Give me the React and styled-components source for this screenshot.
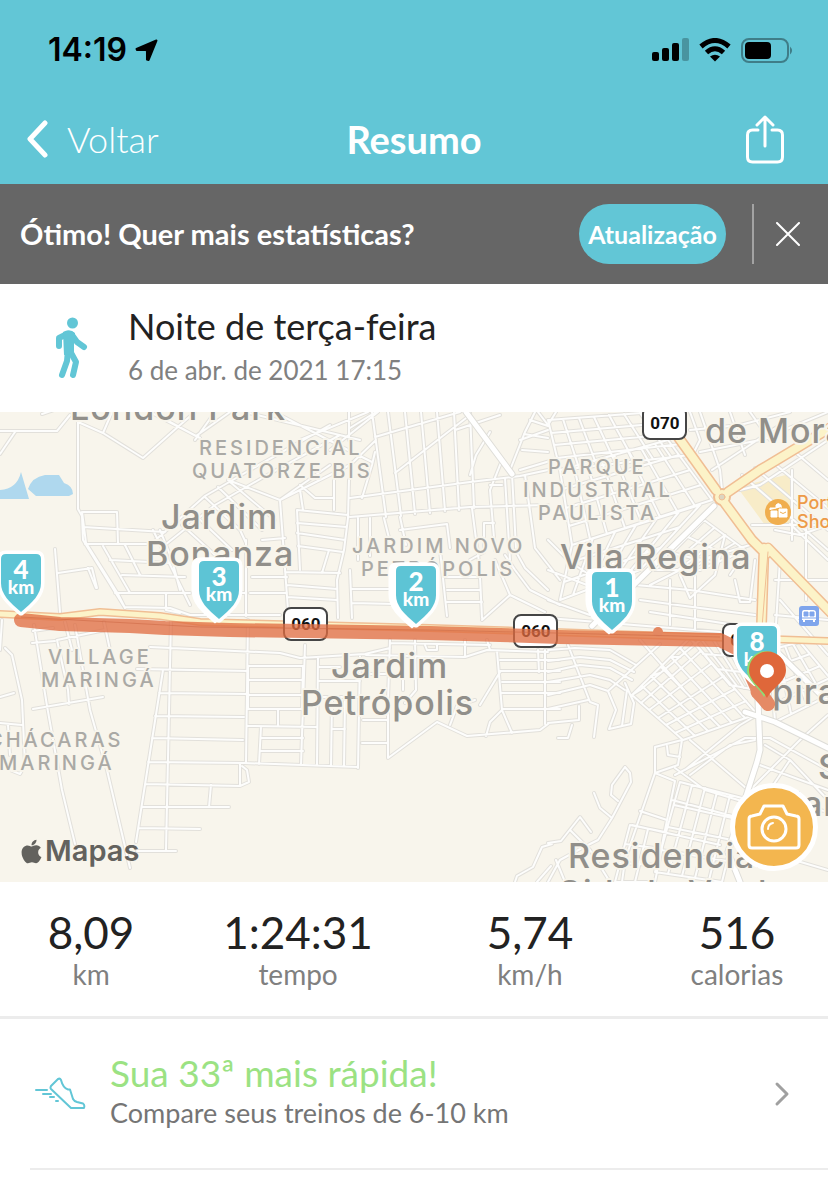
import React from 'react';
import styled, { createGlobalStyle } from 'styled-components';
import { FaApple } from 'react-icons/fa';

const teal = '#62c6d6';
const brandFont = 'Lato, "Open Sans", "Liberation Sans", sans-serif';
const systemFont = 'Inter, Roboto, "Liberation Sans", sans-serif';

const GlobalStyle = createGlobalStyle`
  * { box-sizing: border-box; }
  body { margin: 0; background: #fff; font-family: ${brandFont}; color: #222; }
  button { font: inherit; color: inherit; background: none; border: 0; padding: 0; cursor: pointer; }
  h1, h2, h3, p, dl, dt, dd { margin: 0; font-weight: 400; }
  svg { display: block; flex: none; }
`;

const Page = styled.div`
  display: flex;
  flex-direction: column;
  min-height: 100vh;
`;

const TopBar = styled.header`
  background: ${teal};
`;

const StatusBar = styled.div`
  display: flex;
  align-items: center;
  justify-content: space-between;
  height: 96px;
  padding: 4px 34px 0 48px;
  color: #000;
`;

const Clock = styled.div`
  display: flex;
  align-items: center;
  gap: 8px;
  font: 600 32px/40px ${systemFont};
`;

const StatusIcons = styled.div`
  display: flex;
  align-items: center;
  gap: 10px;
`;

const NavBar = styled.nav`
  display: grid;
  grid-template-columns: 1fr auto 1fr;
  align-items: center;
  height: 88px;
  padding: 0 44px 2px 26px;
  color: #fff;
`;

const BackButton = styled.button`
  display: flex;
  align-items: center;
  gap: 19px;
  justify-self: start;
  && { font-size: 36px; line-height: 44px; font-weight: 300; }
`;

const NavTitle = styled.h1`
  && { font-size: 38px; line-height: 44px; font-weight: 700; }
  padding-left: 18px;
`;

const ShareButton = styled.button`
  justify-self: end;
`;

const Banner = styled.section`
  display: flex;
  align-items: center;
  height: 100px;
  padding: 0 28px 0 20px;
  background: #666;
  color: #fff;
`;

const BannerText = styled.p`
  flex: 1;
  && { font-size: 29px; line-height: 36px; font-weight: 700; }
`;

const UpgradeButton = styled.button`
  && {
    width: 147px;
    height: 60px;
    border-radius: 30px;
    background: ${teal};
    font-size: 25px;
    font-weight: 700;
    white-space: nowrap;
  }
`;

const BannerDivider = styled.span`
  width: 2px;
  height: 60px;
  margin: 0 22px 0 26px;
  background: #a3a3a3;
`;

const Activity = styled.section`
  display: flex;
  align-items: center;
  height: 128px;
  padding-left: 52px;
  gap: 38px;
`;

const ActivityTitle = styled.h2`
  && { font-size: 36px; line-height: 44px; }
  color: #222;
`;

const ActivityDate = styled.p`
  font-size: 26px;
  line-height: 44px;
  color: #808080;
`;

const MapPanel = styled.section`
  position: relative;
  height: 470px;
  overflow: hidden;
  background: #f8f5ec;
`;

const MapCanvas = styled.svg`
  width: 100%;
  height: 100%;
`;

const Place = styled.text`
  font-family: ${systemFont};
  font-size: ${(p) => (p.$small ? 20 : 34)}px;
  font-weight: 500;
  letter-spacing: ${(p) => (p.$small ? 3 : 1)}px;
  fill: ${(p) => (p.$small ? '#aaa9a5' : '#918f8a')};
  stroke: #f8f5ec;
  stroke-width: 4px;
  stroke-linejoin: round;
  paint-order: stroke;
`;

const ShopName = styled.text`
  font: 500 18px ${systemFont};
  fill: #ed9a48;
  stroke: #f8f5ec;
  stroke-width: 3px;
  paint-order: stroke;
`;

const ShieldText = styled.text`
  font: 700 17px Roboto, sans-serif;
  fill: #111;
`;

const PinNumber = styled.text`
  font: 900 26px ${brandFont};
  fill: #fff;
`;

const PinUnit = styled.text`
  font: 900 19px ${brandFont};
  fill: #fff;
`;

const Attribution = styled.div`
  position: absolute;
  left: 18px;
  bottom: 13px;
  display: flex;
  align-items: center;
  color: #63625e;
  font: 600 29px/36px ${systemFont};
`;

const CameraButton = styled.button`
  && {
    position: absolute;
    right: 10px;
    bottom: 11px;
    width: 88px;
    height: 88px;
    display: grid;
    place-items: center;
    border: 5px solid #fff;
    border-radius: 50%;
    background: #f3b64f;
  }
`;

const Stats = styled.dl`
  display: grid;
  grid-template-columns: 22fr 28fr 28fr 22fr;
  height: 137px;
  padding-top: 24px;
  border-bottom: 3px solid #ececec;
  text-align: center;
`;

const Stat = styled.div`
  display: flex;
  flex-direction: column-reverse;
  justify-content: flex-end;
`;

const StatValue = styled.dd`
  font-size: 44px;
  line-height: 52px;
  color: #222;
`;

const StatLabel = styled.dt`
  font-size: 28px;
  line-height: 32px;
  color: #808080;
`;

const CompareLink = styled.a`
  display: flex;
  align-items: center;
  height: 151px;
  margin-left: 30px;
  padding: 0 38px 0 4px;
  gap: 24px;
  border-bottom: 2px solid #ececec;
  color: inherit;
  text-decoration: none;
`;

const CompareText = styled.div`
  flex: 1;
  padding-bottom: 6px;
`;

const CompareTitle = styled.h3`
  && { font-size: 37px; line-height: 44px; }
  color: #9be283;
`;

const CompareDetail = styled.p`
  font-size: 27px;
  line-height: 36px;
  color: #757575;
`;

// Streets of a block: the corners run clockwise from the top left.
// Zero rows gives streets in one direction only.
function block([a, b, c, d], cols, rows) {
  const mix = (p, q, t) => [p[0] + (q[0] - p[0]) * t, p[1] + (q[1] - p[1]) * t];
  const line = (p, q) => `M${p.map(Math.round)}L${q.map(Math.round)}`;
  let out = '';
  for (let i = 0; i <= cols; i += 1) out += line(mix(a, b, i / cols), mix(d, c, i / cols));
  for (let j = 0; rows > 0 && j <= rows; j += 1) out += line(mix(a, d, j / rows), mix(b, c, j / rows));
  return out;
}

const streets = [
  // north west
  'M0 431H57L70 415M0 454L15 432M42 414L60 408M78 422V509L82 516L83 540L125 608M78 422L103 433L143 458L180 425L195 412M103 433L112 412M150 412L200 438M83 512H117L118 543M83 527L165 532M82 512L86 543L118 594L125 608M85 544H150',
  'M103 546L130 593M125 545L140 575M55 549L60 612M58 573L92 568L97 588M88 568L96 588M115 593H190M122 575L185 577M110 560L170 563M153 530L190 605M166 594V610L180 613M195 440L215 412M170 422L196 436L230 412M125 607L170 608L190 615H280',
  'M150 545L205 496L250 470L330 425M165 545L215 505L262 478L340 435M182 525L215 555M192 512L232 550M205 497L240 530L246 543M218 487L262 530M230 482L275 520M160 530L172 560L180 590M246 540V616M252 577H287M250 593H287M200 593H246M228 480L280 500L330 465M262 540L285 538',
  'M245 412L360 440M280 415L348 450L372 462M300 440L368 412M330 450L378 412M349 412V440M350 428L376 412M280 500L288 610M280 500L350 465L376 440M300 485L315 498H334M300 490L303 510M334 480V510',
  // north centre
  block([[372, 412], [470, 412], [474, 508], [386, 517]], 6, 0),
  'M375 437L460 412M395 473L470 415M375 452L372 465L362 498M349 480L348 518L344 550L337 580L338 618M297 510L348 515M297 523L347 527M297 533L345 540M298 546L343 552M285 572L340 573M287 585L337 589M287 597L337 600M297 510L300 570M329 550L322 573M350 570L352 618M358 518V560M370 518V556M352 589H395M352 603L395 604M445 577H480M447 590H480M447 602H482M480 577L482 618M440 550L447 616',
  'M350 517L470 507L548 505M350 498L470 482L520 476L548 470M400 530L447 524L450 548M384 518L392 550M400 517L406 545M472 508L480 570M484 523H494M484 523V552L470 560M490 432L476 455L470 475M510 470L525 432L535 412M512 474L502 460L490 490L495 550M512 474L516 548M505 478L510 560M490 485H502M520 440L548 430M530 420L548 426M524 434L548 438M522 450L548 452M520 470L560 458',
  'M482 620L510 595L545 612M525 475L535 548L560 580M505 555L515 570L530 590L560 605M515 550L525 568L548 590M495 560L510 595M538 412L548 425L556 412M455 430L500 415',
  block([[548, 420], [655, 412], [690, 455], [560, 470]], 7, 4),
  block([[560, 470], [668, 440], [712, 500], [572, 545]], 8, 4),
  block([[572, 545], [700, 505], [640, 570], [560, 600]], 6, 3),
  block([[704, 520], [745, 550], [700, 570], [655, 570]], 4, 3),
  'M548 540L570 562L590 575M548 570L600 590M548 600L590 615M548 618L720 632M636 585L690 590L755 600M640 600L700 608L755 615M650 612L755 628M650 585L700 560L750 545M680 575L690 598L715 575L725 535M730 575L740 560M735 580L740 602H750L755 560M695 575V630M670 580V625',
  // north east
  'M690 412L700 440L690 460M700 412L720 470L722 490M690 430L740 425L790 412M700 452L760 440L828 412M712 470L780 425M730 412L745 455M750 412L770 440M742 475L828 550M755 468L828 530M770 460L828 508M790 448L828 480M740 490L760 485L828 440M792 470V540M752 525H828M790 524L828 560M806 525V600M775 530L800 535L828 525M780 600L828 655M775 580H828M780 560L775 640M775 615L828 620',
  // west and the slanted estate
  'M34 625L47 706L62 790L75 844M33 709L103 697M75 625L90 710L107 770L130 868M57 640L68 690L69 704M32 643L55 641M5 648L12 655L22 700L25 765L20 774L10 770M0 697L14 693M0 723L22 725M8 725L10 755M33 631L53 628M57 640L105 630M104 622L110 650M0 650L2 620M65 622L72 650',
  'M163 670L136 842M171 620L166 850M248 620L246 762M137 669L248 671M159 693L247 694M155 716L244 717M152 738L243 740M148 762L244 763L358 767M145 784L240 786M142 807H229M139 828L200 829M137 851H176M211 785L209 807M240 763V786L249 782L247 770L242 766M150 647L280 653L300 658L365 654L390 648',
  // Jardim Petrópolis
  block([[248, 666], [303, 666], [302, 709], [248, 709]], 1, 3),
  'M248 726L316 727M261 727L259 764M261 738H303M261 751H303M278 709V726M305 645L301 765M318 658L317 765M332 700L331 766M345 700L344 766M360 655L358 768M362 743H388M388 712V758L437 722L467 736L540 730L548 724M363 720H388M332 729H345M363 674H388M390 640L388 700M318 681H360M318 667H340M318 697H360M366 655L465 657L487 650L548 652M390 643L490 645M415 640L416 690L405 703M403 660V690M425 645L427 650H437V645M465 640V657M487 640L490 650M497 651L502 710L512 733M502 710L490 722L486 736M480 705L500 672M500 660H560M500 671H560M502 682H560M502 693H560M503 709H560M538 650L539 672M545 650V724M450 725L457 706L475 700',
  'M515 882L517 876L533 867L542 847L552 844M537 882L551 866',
  // south east
  'M548 650L575 648L610 650L636 665M548 661L580 657L610 660L634 672M548 672L580 665L610 668L632 680M548 682L590 675L610 680L625 690M548 695L590 685L608 691M568 645L590 702L598 705L594 737M548 709L588 700M548 723L579 720V706M572 725L568 738H558M608 691L616 710L609 729L631 724L634 703L625 683M622 726L627 690M608 691L660 644',
  block([[632, 695], [690, 638], [757, 714], [683, 740]], 6, 6),
  block([[632, 695], [690, 638], [700, 640], [640, 690]], 3, 1),
  block([[690, 638], [735, 640], [757, 690], [730, 685]], 4, 3),
  block([[770, 650], [800, 642], [840, 690], [775, 722]], 4, 4),
  'M655 747L682 740L678 765L655 773V747M655 773L625 860L622 882M667 746L668 755L680 757M655 773L675 781M675 781L665 830L655 882M685 770L740 725L757 715M675 775L745 738H770L828 770M690 775L730 745L755 740M675 768L705 790L745 802M672 800L740 818M632 825L720 845M640 811L667 820M690 740L760 800L800 830M757 764L828 790M765 745L790 760L828 800M790 760L770 790M750 790L800 740L828 715M640 640L684 690',
  block([[680, 782], [742, 798], [722, 882], [655, 872]], 5, 4),
  block([[630, 825], [665, 832], [655, 882], [615, 882]], 2, 3),
  'M625 767L630 773L631 782L612 818L598 840L582 848L560 860L548 882M625 767L612 785L611 795L618 801M594 793L600 808L612 818M548 843L561 841L580 817L591 832M570 830L590 850M556 860L565 882M590 850L610 882M760 850L828 870M780 800L828 812',
].join('');

const whiteRoads = 'M714 506L592 626M758 700L760 750L757 762L748 790L735 830L728 852L740 882M745 712L775 722L828 748M775 650L828 702M466 412L512 474';
const highways = 'M676 434L716 490M728 492L760 470L840 422M724 502L752 540L766 554M764 548L761 640M768 548L840 622';
const trunk = 'M0 614L60 617L100 612L160 616L200 622L430 628L828 641';
const route = 'M21 620L60 624L130 626L165 628L230 630L430 633L500 635L560 637L720 640L740 650L757 688L768 704';

const places = [
  { x: 70, y: 420, text: 'London Park' },
  { x: 199, y: 455, text: 'RESIDENCIAL', small: true },
  { x: 192, y: 478, text: 'QUATORZE BIS', small: true },
  { x: 161, y: 529, text: 'Jardim' },
  { x: 146, y: 566, text: 'Bonanza' },
  { x: 352, y: 553, text: 'JARDIM NOVO', small: true },
  { x: 361, y: 576, text: 'PETRÓPOLIS', small: true },
  { x: 548, y: 474, text: 'PARQUE', small: true },
  { x: 523, y: 497, text: 'INDUSTRIAL', small: true },
  { x: 538, y: 520, text: 'PAULISTA', small: true },
  { x: 560, y: 569, text: 'Vila Regina' },
  { x: 705, y: 443, text: 'de Morais' },
  { x: 48, y: 664, text: 'VILLAGE', small: true },
  { x: 41, y: 687, text: 'MARINGÁ', small: true },
  { x: -12, y: 747, text: 'CHÁCARAS', small: true },
  { x: -1, y: 770, text: 'MARINGÁ', small: true },
  { x: 331, y: 678, text: 'Jardim' },
  { x: 301, y: 715, text: 'Petrópolis' },
  { x: 762, y: 704, text: 'Ipiranga' },
  { x: 818, y: 779, text: 'Sta' },
  { x: 771, y: 816, text: 'Maria' },
  { x: 568, y: 868, text: 'Residencial' },
  { x: 557, y: 905, text: 'Cidade Verde' },
];

const kmPins = [
  { x: 21, y: 554, n: 4 },
  { x: 219, y: 561, n: 3, ghost: 4 },
  { x: 416, y: 566, n: 2, ghost: 4 },
  { x: 612, y: 572, n: 1, ghost: 3 },
  { x: 757, y: 626, n: 8 },
];

const pinShape = 'M-15 0H15Q20 0 20 5V29C20 40 12 48 0 58C-12 48 -20 40 -20 29V5Q-20 0 -15 0Z';

function KmPin({ x, y, n, ghost }) {
  return (
    <g transform={`translate(${x} ${y})`}>
      {ghost && <path d={pinShape} transform={`translate(${-ghost} 0)`} fill={teal} stroke="#fff" strokeWidth="7" />}
      <path d={pinShape} fill={teal} stroke="#fff" strokeWidth="7" strokeLinejoin="round" />
      <path d={pinShape} fill="#5dc4d5" />
      <PinNumber x="0" y="25" textAnchor="middle">{n}</PinNumber>
      <PinUnit x="0" y="40" textAnchor="middle">km</PinUnit>
    </g>
  );
}

function Shield({ x, y, label }) {
  return (
    <g>
      <rect x={x} y={y} width="43" height="32" rx="7" fill="#fff" stroke="#454545" strokeWidth="2" />
      <ShieldText x={x + 22} y={y + 22} textAnchor="middle">{label}</ShieldText>
    </g>
  );
}

function RouteMap() {
  return (
    <MapCanvas viewBox="0 412 828 470" preserveAspectRatio="xMidYMid slice" role="img" aria-label="Mapa do percurso">
      <path d="M737 487L790 474V525H765Z" fill="#f8ecc8" />
      <path d="M0 490Q17 489 21 472L29 499H0ZM28 489Q32 477 45 475H59L64 483Q73 486 73 494L69 496H36Z" fill="#afd8ee" />
      <g fill="none" strokeLinejoin="round" strokeLinecap="round">
        <path d={streets} stroke="#e2e0db" strokeWidth="4" />
        <path d={streets} stroke="#fdfdfc" strokeWidth="2" />
        <path d={whiteRoads} stroke="#deddd8" strokeWidth="7" />
        <path d={whiteRoads} stroke="#fff" strokeWidth="5" />
        <path d={trunk} stroke="#f0be94" strokeWidth="8" />
        <path d={trunk} stroke="#fcf3c8" strokeWidth="5" />
        <path d={highways} stroke="#f0be94" strokeWidth="11" />
        <circle cx="722" cy="497" r="8" fill="#fcf3c8" stroke="#f0be94" strokeWidth="2" />
        <path d={highways} stroke="#fcf3c8" strokeWidth="8" />
        <circle cx="722" cy="497" r="3" fill="#ddd5c0" stroke="#f0be94" />
        <path d="M768 552L761 640" stroke="#f0be94" strokeWidth="1" />
      </g>
      {places.map((p, i) => (
        <Place key={i} x={p.x} y={p.y} $small={p.small}>{p.text}</Place>
      ))}
      <circle cx="778" cy="512" r="13" fill="#f0ae4e" />
      <path d="M770 510V508H776V505Q778 502 781 505V507H782M771 511H777V517H771ZM779 509H787V517H779Z" fill="#fff" stroke="#fff" strokeWidth="1" />
      <path d="M780 512Q783 515 786 512" fill="none" stroke="#f0ae4e" strokeWidth="1" />
      <ShopName x="797" y="509">Portal</ShopName>
      <ShopName x="797" y="528">Shopping</ShopName>
      <rect x="799" y="606" width="20" height="20" rx="3" fill="#7fa5ec" />
      <path d="M803 610H813Q816 610 816 613V620H802V613Q802 610 804 610Z" fill="#fff" />
      <path d="M804 612H808V616H804ZM810 612H814V616H810ZM802 618H816" fill="#7fa5ec" stroke="#7fa5ec" strokeWidth="1" />
      <path d="M804 620V622M814 620V622" stroke="#fff" strokeWidth="2" />
      <Shield x={643} y={407} label="070" />
      <Shield x={284} y={608} label="060" />
      <Shield x={514} y={615} label="060" />
      <Shield x={723} y={624} label="060" />
      <path d={route} fill="none" stroke="#df6c41" strokeOpacity="0.76" strokeWidth="14" strokeLinecap="round" strokeLinejoin="round" />
      <circle cx="658" cy="632" r="5" fill="#e48861" />
      <path d="M21 617L200 627L430 630L720 637" fill="none" stroke="#c9633f" strokeOpacity="0.5" strokeWidth="1" />
      {kmPins.map((p) => <KmPin key={p.n} {...p} />)}
      <path d="M757 692L768 704" fill="none" stroke="#e58a65" strokeWidth="13" strokeLinecap="round" />
      <path d="M764 697C759 687 747 681 747 670A19 19 0 0 1 785 670C785 681 770 687 764 697Z" fill="#8fdc74" />
      <path d="M767 698C762 688 749 682 749 670A18 18 0 0 1 786 670C786 682 772 688 767 698Z" fill="#df673a" />
      <circle cx="767" cy="671" r="7" fill="#fff" />
    </MapCanvas>
  );
}

function SignalIcon() {
  return (
    <svg width="37" height="24" viewBox="0 0 37 24" aria-hidden="true">
      <rect x="0" y="14" width="7" height="9" rx="2" />
      <rect x="10" y="10" width="7" height="13" rx="2" />
      <rect x="20" y="5" width="7" height="18" rx="2" />
      <rect x="30" y="0" width="7" height="23" rx="2" opacity="0.25" />
    </svg>
  );
}

function WifiIcon() {
  return (
    <svg width="32" height="24" viewBox="0 0 32 24" aria-hidden="true">
      <g fill="none" stroke="#000" strokeWidth="5">
        <path d="M2 8.500Q16 -3.500 30 8.500" />
        <path d="M7.500 14.500Q16 7 24.500 14.500" />
      </g>
      <path d="M11 18.500Q16 15 21 18.500L16 23.500Z" />
    </svg>
  );
}

function BatteryIcon() {
  return (
    <svg width="53" height="25" viewBox="0 0 53 25" aria-hidden="true">
      <rect x="1" y="1" width="46" height="23" rx="7" fill="none" stroke="#3f7d88" strokeWidth="2" />
      <rect x="4" y="4" width="26" height="17" rx="4" />
      <path d="M49 8.500Q53 12.500 49 16.500Z" fill="#3f7d88" />
    </svg>
  );
}

function WalkIcon() {
  return (
    <svg width="38" height="62" viewBox="0 0 38 62" aria-hidden="true">
      <circle cx="20.500" cy="6" r="5.500" fill={teal} />
      <g fill="none" stroke={teal} strokeLinecap="round" strokeLinejoin="round">
        <path d="M15 17L7 21V29" strokeWidth="6" />
        <path d="M20 18L25 25L32 30" strokeWidth="6" />
        <path d="M16 33L15 44L10 58" strokeWidth="6" />
        <path d="M18 34L24 45L21 58" strokeWidth="6" />
      </g>
      <path d="M11 15Q18 11 23 16L22 26L22 37L12 38Z" fill={teal} />
    </svg>
  );
}

function ShoeIcon() {
  return (
    <svg width="52" height="34" viewBox="0 0 52 34" fill="none" stroke={teal} strokeWidth="2" strokeLinecap="round" strokeLinejoin="round" aria-hidden="true">
      <path d="M17 9L24 2Q26 1 27 3Q29 11 34 12.500H36L39 22Q40 24 43 25L49 26.500Q51 28 50 31H37L17 12Q16 11 17 9Z" />
      <path d="M2 13H13M9 17H17M16 20H20M22 24H24" />
    </svg>
  );
}

const stats = [
  ['8,09', 'km'],
  ['1:24:31', 'tempo'],
  ['5,74', 'km/h'],
  ['516', 'calorias'],
];

export default function App() {
  return (
    <Page>
      <GlobalStyle />
      <TopBar>
        <StatusBar>
          <Clock>
            14:19
            <svg width="23" height="23" viewBox="0 0 22 22" aria-hidden="true">
              <path d="M20.500 1.500L13 20L11.500 19.500V11.500L10.500 10.500H2L1.500 9.500Z" stroke="#000" strokeWidth="2" strokeLinejoin="round" />
            </svg>
          </Clock>
          <StatusIcons>
            <SignalIcon />
            <WifiIcon />
            <BatteryIcon />
          </StatusIcons>
        </StatusBar>
        <NavBar>
          <BackButton type="button">
            <svg width="22" height="38" viewBox="0 0 22 38" fill="none" stroke="#fff" strokeWidth="5" strokeLinecap="round" strokeLinejoin="round" aria-hidden="true">
              <path d="M19 3L4 19L19 35" />
            </svg>
            Voltar
          </BackButton>
          <NavTitle>Resumo</NavTitle>
          <ShareButton type="button" aria-label="Compartilhar">
            <svg width="38" height="49" viewBox="0 0 38 49" fill="none" stroke="#fff" strokeWidth="3" strokeLinecap="round" strokeLinejoin="round" aria-hidden="true">
              <path d="M12 15H6.500Q1.500 15 1.500 20V42Q1.500 47 6.500 47H31.500Q36.500 47 36.500 42V20Q36.500 15 31.500 15H26M19 31V2M11 10L19 2L27 10" />
            </svg>
          </ShareButton>
        </NavBar>
      </TopBar>
      <Banner>
        <BannerText>Ótimo! Quer mais estatísticas?</BannerText>
        <UpgradeButton type="button">Atualização</UpgradeButton>
        <BannerDivider />
        <button type="button" aria-label="Fechar">
          <svg width="24" height="24" viewBox="0 0 24 24" stroke="#fff" strokeWidth="2" strokeLinecap="round" aria-hidden="true">
            <path d="M1 1L23 23M23 1L1 23" />
          </svg>
        </button>
      </Banner>
      <Activity>
        <WalkIcon />
        <div>
          <ActivityTitle>Noite de terça-feira</ActivityTitle>
          <ActivityDate>6 de abr. de 2021 17:15</ActivityDate>
        </div>
      </Activity>
      <MapPanel>
        <RouteMap />
        <Attribution>
          <FaApple size={27} aria-hidden="true" />
          Mapas
        </Attribution>
        <CameraButton type="button" aria-label="Adicionar foto">
          <svg width="54" height="46" viewBox="0 0 54 46" fill="none" stroke="#fff" strokeWidth="3" strokeLinejoin="round" strokeLinecap="round" aria-hidden="true">
            <path d="M5 12L13 10L17 2H36L40 10L49 12Q52 12 52 15V41Q52 44 49 44H5Q2 44 2 41V15Q2 12 5 12Z" />
            <circle cx="27" cy="25" r="12" />
            <path d="M21 25Q21 20 26 19" strokeWidth="2" />
          </svg>
        </CameraButton>
      </MapPanel>
      <Stats>
        {stats.map(([value, label]) => (
          <Stat key={label}>
            <StatLabel>{label}</StatLabel>
            <StatValue>{value}</StatValue>
          </Stat>
        ))}
      </Stats>
      <CompareLink href="#comparar">
        <ShoeIcon />
        <CompareText>
          <CompareTitle>Sua 33ª mais rápida!</CompareTitle>
          <CompareDetail>Compare seus treinos de 6-10 km</CompareDetail>
        </CompareText>
        <svg width="16" height="26" viewBox="0 0 16 26" fill="none" stroke="#a0a0a0" strokeWidth="3" strokeLinecap="round" strokeLinejoin="round" aria-hidden="true">
          <path d="M3 3L13 13L3 23" />
        </svg>
      </CompareLink>
    </Page>
  );
}
